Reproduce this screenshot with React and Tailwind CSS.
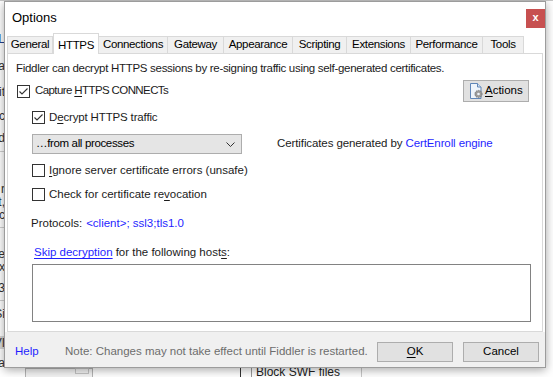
import React from "react";

const tabs = [
  { label: "General", w: "w-[46px]" },
  { label: "HTTPS", w: "w-[46px]", active: true },
  { label: "Connections", w: "w-[69px]" },
  { label: "Gateway", w: "w-[56px]" },
  { label: "Appearance", w: "w-[69px]" },
  { label: "Scripting", w: "w-[54px]" },
  { label: "Extensions", w: "w-[64px]" },
  { label: "Performance", w: "w-[72px]" },
  { label: "Tools", w: "w-[41px]" },
];

function CheckBox({ checked }) {
  return (
    <div className="w-[13px] h-[13px] shrink-0 border border-[#333333] bg-white flex items-center justify-center">
      {checked && (
        <svg width="11" height="11" viewBox="0 0 11 11">
          <polyline points="1.5,5.5 4,8 9.5,2.5" fill="none" stroke="#333333" strokeWidth="1.1" />
        </svg>
      )}
    </div>
  );
}

function ActionsIcon() {
  return (
    <svg width="16" height="16" viewBox="0 0 16 16" className="shrink-0">
      <path d="M2.5 0.5h7l3.5 3.5v11.5h-10.5z" fill="#eef4fb" stroke="#5f86b8" />
      <path d="M9.5 0.5v3.5h3.5" fill="#d7e4f3" stroke="#5f86b8" />
      <circle cx="10.5" cy="11" r="3.6" fill="#9a9a9a" stroke="#6d6d6d" strokeWidth="0.8" strokeDasharray="1.4 0.9" />
      <circle cx="10.5" cy="11" r="1.3" fill="#eef4fb" />
    </svg>
  );
}

function BgLetter({ top, text, className = "" }) {
  return (
    <span className={`absolute right-[548px] text-[12px] leading-[12px] text-[#333] whitespace-nowrap ${className}`} style={{ top }}>
      {text}
    </span>
  );
}

export default function App() {
  return (
    <div className="relative w-[553px] h-[377px] overflow-hidden bg-white font-['Liberation_Sans','Noto_Sans',sans-serif] text-[11.5px] text-[#1b1b1b]">
      {/* app behind the dialog */}
      <div className="absolute left-0 top-0 w-full h-px bg-[#c8c8c8]" />
      <BgLetter top={33} text="URL" className="text-[#23408e]" />
      <BgLetter top={60} text="ca" />
      <BgLetter top={86} text="it" />
      <BgLetter top={110} text="ic" />
      <BgLetter top={132} text="id" />
      <div className="absolute left-0 top-[151px] w-[6px] h-px bg-[#cfcfcf]" />
      <BgLetter top={183} text="r" />
      <BgLetter top={196} text="t," />
      <BgLetter top={209} text="c" />
      <div className="absolute left-0 top-[227px] w-[6px] h-px bg-[#cfcfcf]" />
      <BgLetter top={248} text="le" />
      <BgLetter top={261} text="x" />
      <BgLetter top={282} text="3" />
      <div className="absolute left-0 top-[300px] w-[6px] h-px bg-[#cfcfcf]" />
      <BgLetter top={308} text="Si" />
      <div className="absolute left-0 top-[336px] w-[6px] h-[13px] bg-[#d6d6d6]" />
      <BgLetter top={337} text="VI" />
      <BgLetter top={357} text="a" />
      <div className="absolute left-[25px] top-[368px] w-[68px] h-[10px] border border-[#b4b4b4] bg-[#f3f3f3]" />
      <div className="absolute left-[75px] top-[368px] w-[14px] h-[6px] border border-[#c4c4c4]" />
      <div className="absolute left-[240px] top-[366px] w-px h-[12px] bg-[#333]" />
      <div className="absolute left-[251px] top-[366px] w-px h-[12px] bg-[#9a9a9a]" />
      <div className="absolute left-[361px] top-[366px] w-px h-[12px] bg-[#c8c8c8]" />
      <span className="absolute left-[256px] top-[363px] text-[12px] text-[#222]">Block SWF files</span>

      {/* dialog window */}
      <div className="absolute left-[4px] top-[1px] w-[542px] h-[367px] border border-[#9c9c9c] bg-white flex flex-col shadow-[0_2px_9px_rgba(0,0,0,0.35)]">
        {/* title bar */}
        <div className="h-[30px] flex items-start justify-between shrink-0">
          <span className="ml-[7px] mt-[8px] text-[13px] leading-[16px] text-black">Options</span>
          <div className="mt-[7px] w-[19px] h-[19px] bg-[#c75050] flex items-center justify-center text-white text-[11px] font-bold leading-none pb-[2px]">
            x
          </div>
        </div>

        {/* tabs */}
        <div className="ml-[2px] h-[21px] flex items-end shrink-0 tracking-[-0.35px]">
          {tabs.map((t) =>
            t.active ? (
              <div
                key={t.label}
                className={`${t.w} h-[21px] -mb-px relative z-10 bg-white border border-b-0 border-[#d9d9d9] flex items-start justify-center pt-[3px] text-black`}
              >
                {t.label}
              </div>
            ) : (
              <div
                key={t.label}
                className={`${t.w} h-[17px] bg-[#f0f0f0] border border-b-0 border-l-0 first:border-l border-[#d9d9d9] flex items-center justify-center text-black`}
              >
                {t.label}
              </div>
            )
          )}
        </div>

        {/* tab page */}
        <div className="mx-[2px] h-[279px] shrink-0 border border-[#d9d9d9] bg-white flex flex-col">
          <div className="mt-[8px] h-[14px] pl-[8px] flex items-center whitespace-nowrap tracking-[-0.3px]">
            Fiddler can decrypt HTTPS sessions by re-signing traffic using self-generated certificates.
          </div>

          <div className="mt-[4px] h-[22px] flex items-center pl-[9px] pr-[13px]">
            <CheckBox checked />
            <span className="ml-[5px] tracking-[-0.6px]">
              Capture <span className="underline underline-offset-2">H</span>TTPS CONNECTs
            </span>
            <div className="ml-auto w-[66px] h-[22px] bg-[#e1e1e1] border border-[#adadad] flex items-center pl-[4px] gap-[1px] text-black">
              <ActionsIcon />
              <span>
                <span className="underline underline-offset-2">A</span>ctions
              </span>
            </div>
          </div>

          <div className="mt-[9px] h-[13px] flex items-center pl-[24px]">
            <CheckBox checked />
            <span className="ml-[4px] tracking-[-0.15px]">
              D<span className="underline underline-offset-2">e</span>crypt HTTPS traffic
            </span>
          </div>

          <div className="mt-[10px] h-[20px] flex items-center pl-[24px]">
            <div className="w-[210px] h-[20px] bg-[#e5e5e5] border border-[#adadad] flex items-center justify-between pl-[3px] pr-[6px] text-black">
              <span className="tracking-[-0.35px]">…from all processes</span>
              <svg width="9" height="5" viewBox="0 0 9 5">
                <polyline points="0.5,0.5 4.5,4.5 8.5,0.5" fill="none" stroke="#333" strokeWidth="1" />
              </svg>
            </div>
            <span className="ml-[35px] whitespace-nowrap tracking-[-0.1px]">
              Certificates generated by <span className="text-[#1f1fff]">CertEnroll engine</span>
            </span>
          </div>

          <div className="mt-[10px] h-[13px] flex items-center pl-[24px]">
            <CheckBox />
            <span className="ml-[4px]">
              <span className="underline underline-offset-2">I</span>gnore server certificate errors (unsafe)
            </span>
          </div>

          <div className="mt-[11px] h-[13px] flex items-center pl-[24px]">
            <CheckBox />
            <span className="ml-[4px]">
              Check for certificate re<span className="underline underline-offset-2">v</span>ocation
            </span>
          </div>

          <div className="mt-[16px] h-[14px] flex items-center pl-[23px] whitespace-nowrap">
            Protocols: <span className="ml-[4px] text-[#1f1fff]">&lt;client&gt;; ssl3;tls1.0</span>
          </div>

          <div className="mt-[15px] h-[14px] flex items-center pl-[26px] whitespace-nowrap">
            <span className="text-[#1f1fff] underline underline-offset-2">Skip decryption</span>
            <span className="ml-[3px]">
              for the following host<span className="underline underline-offset-2">s</span>:
            </span>
          </div>

          <div className="mt-[4px] ml-[24px] w-[499px] h-[58px] border border-[#828282] bg-white" />
        </div>

        {/* footer */}
        <div className="flex-1 bg-[#f0f0f0] flex items-center pt-[5px]">
          <span className="ml-[10px] w-[50px] text-[#1f1fff]">Help</span>
          <span className="text-[#6d6d6d] whitespace-nowrap">
            Note: Changes may not take effect until Fiddler is restarted.
          </span>
          <div className="ml-auto w-[76px] h-[20px] bg-[#e1e1e1] border border-[#adadad] flex items-center justify-center text-black">
            <span>
              <span className="underline underline-offset-2">O</span>K
            </span>
          </div>
          <div className="ml-[10px] mr-[6px] w-[76px] h-[20px] bg-[#e1e1e1] border border-[#adadad] flex items-center justify-center text-black">
            Cancel
          </div>
        </div>
      </div>
    </div>
  );
}
